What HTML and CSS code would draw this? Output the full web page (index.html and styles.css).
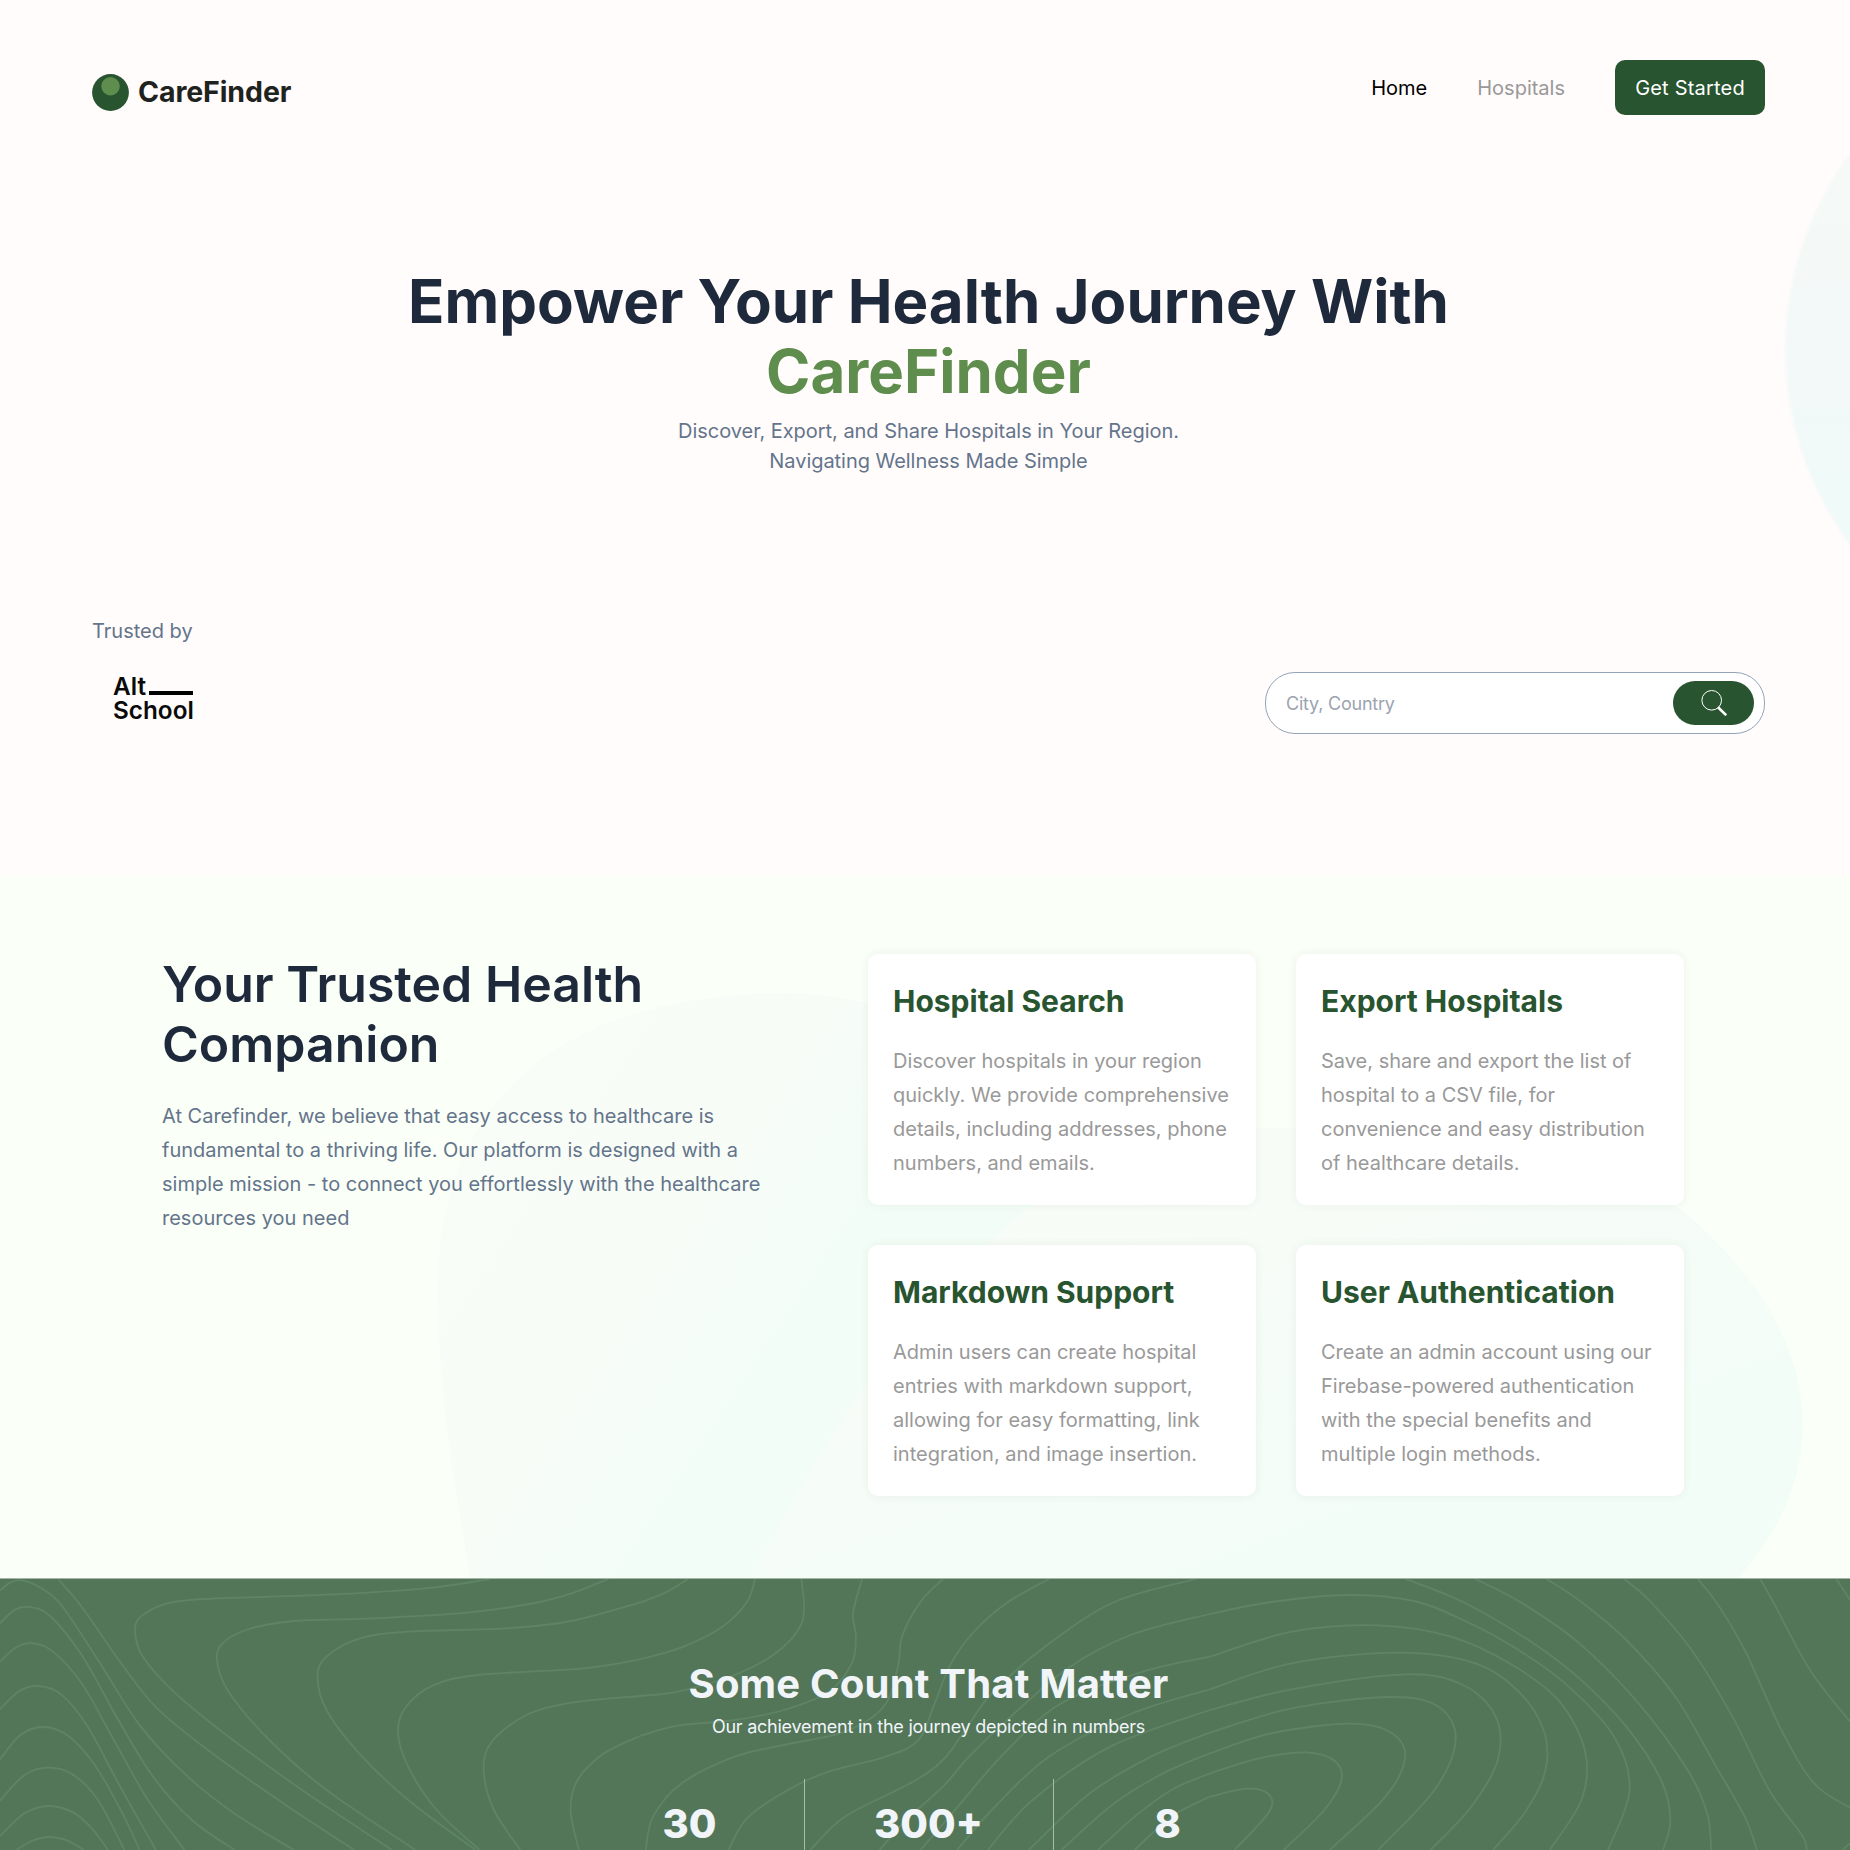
FILE: index.html
```html
<!DOCTYPE html>
<html lang="en">
<head>
<meta charset="utf-8">
<title>CareFinder</title>
<link rel="stylesheet" href="styles.css">
</head>
<body>
<header class="hero">
  <div class="hero-blob"></div>
  <nav class="nav">
    <a class="logo">
      <svg class="logo-mark" viewBox="0 0 37 37"><circle cx="18.5" cy="18.5" r="18.4" fill="#285430"/><circle cx="18.5" cy="12.3" r="9.2" fill="#5f8d4e"/></svg>
      <span>CareFinder</span>
    </a>
    <div class="nav-links">
      <a class="active">Home</a>
      <a>Hospitals</a>
      <button class="cta">Get Started</button>
    </div>
  </nav>
  <div class="hero-copy">
    <h1>Empower Your Health Journey With<br><span>CareFinder</span></h1>
    <p>Discover, Export, and Share Hospitals in Your Region.<br>Navigating Wellness Made Simple</p>
  </div>
  <div class="hero-foot">
    <div class="trusted">
      <p>Trusted by</p>
      <div class="altschool">
        <div class="alt-top"><span>Alt</span><i></i></div>
        <div>School</div>
      </div>
    </div>
    <div class="search">
      <span>City, Country</span>
      <button>
        <svg width="26" height="26" viewBox="0 0 26 26" fill="none" stroke="#fff"><circle cx="10.7" cy="10.3" r="9.8"/><path d="M17 17.2 25.2 25.2" stroke-width="2.6"/></svg>
      </button>
    </div>
  </div>
</header>

<section class="features">
  <svg class="features-blob" viewBox="0 0 1850 702" preserveAspectRatio="none">
    <defs>
      <linearGradient id="mist" gradientUnits="userSpaceOnUse" x1="480" y1="200" x2="840" y2="440">
        <stop offset="0" stop-color="#f8fdf7"/><stop offset=".6" stop-color="#f7fcf7"/><stop offset=".9" stop-color="#f3fdf7"/><stop offset="1" stop-color="#f3fdf7"/>
      </linearGradient>
      <linearGradient id="mint" gradientUnits="userSpaceOnUse" x1="1000" y1="200" x2="1180" y2="700">
        <stop offset="0" stop-color="#f8fdf6"/><stop offset=".5" stop-color="#f7fcf7"/><stop offset="1" stop-color="#f3fdf7"/>
      </linearGradient>
    </defs>
    <path fill="url(#mist)" d="M470 702C455 604 438 524 438 414C438 224 560 117 790 117C960 120 1100 250 1100 300L1000 702Z"/>
    <path fill="url(#mint)" d="M751 702C800 610 850 520 930 430C1020 320 1120 252 1280 252C1500 244 1640 290 1700 350C1830 470 1830 600 1738 702Z"/>
  </svg>
  <div class="intro">
    <h2>Your Trusted Health Companion</h2>
    <p>At Carefinder, we believe that easy access to healthcare is fundamental to a thriving life. Our platform is designed with a simple mission - to connect you effortlessly with the healthcare resources you need</p>
  </div>
  <div class="cards">
    <article class="card"><h3>Hospital Search</h3><p>Discover hospitals in your region quickly. We provide comprehensive details, including addresses, phone numbers, and emails.</p></article>
    <article class="card"><h3>Export Hospitals</h3><p>Save, share and export the list of hospital to a CSV file, for convenience and easy distribution of healthcare details.</p></article>
    <article class="card"><h3>Markdown Support</h3><p>Admin users can create hospital entries with markdown support, allowing for easy formatting, link integration, and image insertion.</p></article>
    <article class="card"><h3>User Authentication</h3><p>Create an admin account using our Firebase-powered authentication with the special benefits and multiple login methods.</p></article>
  </div>
</section>

<section class="stats">
  <svg class="contours" id="contours" viewBox="0 0 1850 272"></svg>
  <h2>Some Count That Matter</h2>
  <p>Our achievement in the journey depicted in numbers</p>
  <div class="counts">
    <div class="count">30</div>
    <div class="count">300+</div>
    <div class="count">8</div>
  </div>
</section>
<script src="contours.js"></script>
</body>
</html>
```

FILE: styles.css
```css
* { box-sizing: border-box; }
html, body { height: 100%; }
body { margin: 0; height: 1850px; overflow: hidden; display: flex; flex-direction: column; font-family: Inter, "Liberation Sans", sans-serif; font-size: 20px; background: #fffcfb; }
h1, h2, h3, p { margin: 0; }
button { border: 0; font: inherit; background: #285430; color: #fff; }

.hero { position: relative; overflow: hidden; flex: none; height: 876px; padding: 60px 85px 0 92px; display: flex; flex-direction: column; }
.hero-blob { position: absolute; left: 1785px; top: 18px; width: 674px; height: 662px; border-radius: 50%; background: linear-gradient(#f6f9f8 20%, #f0faf8 75%); filter: blur(1px); }
.nav { display: flex; justify-content: space-between; height: 55px; }
.logo { display: flex; align-items: center; gap: 9px; height: 37px; margin-top: 14px; font-size: 28.5px; font-weight: 700; color: #1f2320; letter-spacing: -.1px; }
.logo span { margin-top: -2px; }
.logo-mark { width: 37px; height: 37px; }
.nav-links { display: flex; align-items: center; gap: 50px; color: #999; }
.nav-links .active { color: #000; }
.cta { width: 150px; height: 55px; border-radius: 10px; padding: 0; letter-spacing: .2px; }
.hero-copy { text-align: center; margin-top: 151px; }
.hero-copy h1 { font-size: 60px; line-height: 70px; font-weight: 700; color: #1e293b; }
.hero-copy h1 span { color: #5f8d4e; }
.hero-copy p { margin-top: 10px; line-height: 30px; letter-spacing: -.04px; color: #64748b; }
.hero-foot { display: flex; justify-content: space-between; align-items: flex-end; margin-top: 140px; height: 118px; }
.trusted { align-self: flex-start; color: #64748b; line-height: 30px; }
.altschool { margin: 28px 0 0 21px; color: #0a0a0a; font-size: 24.3px; font-weight: 600; line-height: 24px; width: 80px; }
.alt-top { display: flex; align-items: flex-end; gap: 3px; }
.alt-top i { flex: 1; height: 4px; background: #000; margin-bottom: 3px; }
.search { display: flex; align-items: center; justify-content: space-between; width: 500px; height: 62px; border: 1px solid #94a3b8; border-radius: 30px; background: #fff; padding: 0 10px 0 20px; font-size: 18px; letter-spacing: -.22px; color: #9ca3af; }
.search button { width: 81px; height: 44px; border-radius: 22px; padding: 0; display: flex; align-items: center; justify-content: center; }

.features { position: relative; flex: none; height: 702px; background: #fafff8; padding: 78px 166px 0 162px; display: flex; gap: 106px; }
.features-blob { position: absolute; inset: 0; width: 100%; height: 100%; }
.intro, .cards { position: relative; }
.intro { width: 600px; flex: none; }
.intro h2 { font-size: 50px; line-height: 60px; font-weight: 600; color: #1e293b; }
.intro p { margin-top: 25px; line-height: 34px; color: #64748b; }
.cards { flex: 1; display: grid; grid-template-columns: 1fr 1fr; gap: 40px; align-content: start; }
.card { background: #fff; border-radius: 10px; padding: 25px; height: 251px; box-shadow: 0 0 10px rgba(40, 84, 48, .07); }
.card h3 { font-size: 30px; line-height: 45px; font-weight: 700; color: #285430; white-space: nowrap; }
.card p { margin-top: 20px; line-height: 34px; color: #999; }

.stats { position: relative; flex: 1; min-height: 0; overflow: hidden; background: #537659; border-top: 1px solid #a6b5a8; padding: 81px 85px 0 92px; text-align: center; color: #f1f5f9; }
.contours { position: absolute; left: 0; top: 0; width: 1850px; height: 272px; fill: none; stroke: #5f8465; stroke-width: 1.8; }
.stats h2, .stats p, .counts { position: relative; }
.stats h2 { font-size: 40px; line-height: 48px; font-weight: 700; letter-spacing: .2px; }
.stats p { font-size: 18px; line-height: 27px; margin-top: 5px; letter-spacing: -.24px; }
.counts { display: flex; justify-content: center; margin-top: 39px; }
.count { height: 120px; padding-top: 20px; font-size: 40px; line-height: 50px; font-weight: 800; width: 228px; }
.count:nth-child(2) { width: 250px; border: solid #a9bbac; border-width: 0 1px; }
```

FILE: contours.js
```js
// Topographic lines: each panel has a left offset and a list of point runs.
const panels = [
  { x: 0, lines: [
    "40,870 80,842 122,831 165,842 205,870",
    "0,828 60,760 122,738 180,758 225,805 265,870",
    "0,722 60,645 120,623 180,645 240,720 305,870",
    "0,598 50,525 107,501 170,530 235,620 300,760 342,870",
    "0,448 45,395 92,378 150,403 215,500 290,670 382,870",
    "0,305 40,262 80,250 130,275 200,370 270,520 360,715 452,870",
    "0,190 35,150 68,141 120,165 200,285 290,480 375,650 470,780 575,870",
    "0,92 25,68 52,61 95,80 150,135 240,300 345,500 460,650 580,765 720,870",
    "142,57 200,140 300,315 385,445 520,580 700,735 868,870",
    "1200,57 1060,83 870,100 640,111 500,117 410,130 345,170 331,215 350,290 430,400 560,530 740,690 960,870",
    "1490,57 1400,100 1310,129 1150,157 900,176 720,183 610,207 545,250 532,305 560,395 660,540 800,690 1018,870",
    "1568,128 1400,183 1240,205 1000,215 880,236 800,290 778,350 800,450 880,580 1000,720 1165,870",
    "1568,298 1430,325 1170,345 1060,377 995,440 975,515 1000,620 1070,750 1175,870",
    "1568,408 1400,428 1290,465 1205,545 1185,630 1210,750 1275,870",
    "1568,528 1480,580 1415,660 1398,750 1418,870"
  ]},
  { x: 600, lines: [
    "98,128 160,98 215,57",
    "98,298 200,262 300,200 360,126 380,57",
    "98,408 190,395 330,345 430,280 488,205 500,140 493,57",
    "98,528 190,497 330,480 450,450 560,395 617,310 627,230 620,160 642,57",
    "112,870 130,770 200,670 330,590 450,555 600,515 695,440 730,320 740,230 785,126 840,57",
    "315,870 360,775 460,690 560,635 700,590 780,540 820,430 860,310 920,210 1000,126 1100,57",
    "515,870 600,770 760,670 840,600 900,500 960,400 1090,260 1260,126 1460,57",
    "685,870 750,780 840,680 900,595 980,500 1140,330 1300,225 1494,162",
    "785,870 870,750 990,580 1130,430 1330,335 1494,290",
    "875,870 960,750 1100,590 1300,462 1494,388",
    "950,870 1060,720 1250,560 1494,450",
    "1050,870 1200,700 1350,590 1494,518",
    "1130,870 1260,730 1380,640 1494,580",
    "1220,870 1310,770 1400,690 1494,640",
    "1310,870 1400,770 1494,710"
  ]},
  { x: 1210, lines: [
    "0,162 150,126 340,105 500,123 620,180 740,258 870,370 990,530 1028,690 975,870",
    "0,290 200,215 410,196 590,230 750,322 860,430 920,580 910,720 832,870",
    "0,388 200,310 460,278 650,310 760,400 820,520 820,640 770,760 693,870",
    "0,450 200,388 480,343 620,375 700,470 705,600 640,740 540,870",
    "0,518 200,445 440,411 560,440 602,540 550,690 412,870",
    "0,580 150,520 340,491 440,515 478,590 430,710 293,870",
    "0,640 120,595 235,577 305,602 322,660 280,750 180,870",
    "0,710 90,686 143,702 145,755 60,870",
    "480,57 620,126 780,240 900,350 1020,500 1105,660 1128,780 1110,870",
    "650,57 760,126 900,245 1050,430 1170,630 1218,760 1228,870",
    "825,57 910,126 1020,240 1140,410 1240,620 1310,770 1340,870",
    "1015,57 1080,126 1180,270 1280,470 1370,690 1450,825 1462,870",
    "1195,57 1240,126 1310,270 1400,510 1480,670 1568,743",
    "1348,57 1380,126 1470,330 1568,485",
    "1535,57 1568,120",
    "1550,870 1568,850"
  ]}
];

const svg = document.getElementById("contours");

// Smooth curve through all points of a run (Catmull-Rom to Bezier).
function curve(p) {
  let d = `M${p[0]}`;
  for (let i = 0; i < p.length - 1; i++) {
    const a = p[i - 1] || p[i], b = p[i], c = p[i + 1], e = p[i + 2] || c;
    d += `C${b[0] + (c[0] - a[0]) / 6},${b[1] + (c[1] - a[1]) / 6} ${c[0] - (e[0] - b[0]) / 6},${c[1] - (e[1] - b[1]) / 6} ${c}`;
  }
  return d;
}

for (const panel of panels) {
  for (const line of panel.lines) {
    const pts = line.split(" ").map(s => {
      const [x, y] = s.split(",").map(Number);
      return [panel.x + x / 2.45, (y - 57) / 3];
    });
    const path = document.createElementNS("http://www.w3.org/2000/svg", "path");
    path.setAttribute("d", curve(pts));
    svg.appendChild(path);
  }
}
```
